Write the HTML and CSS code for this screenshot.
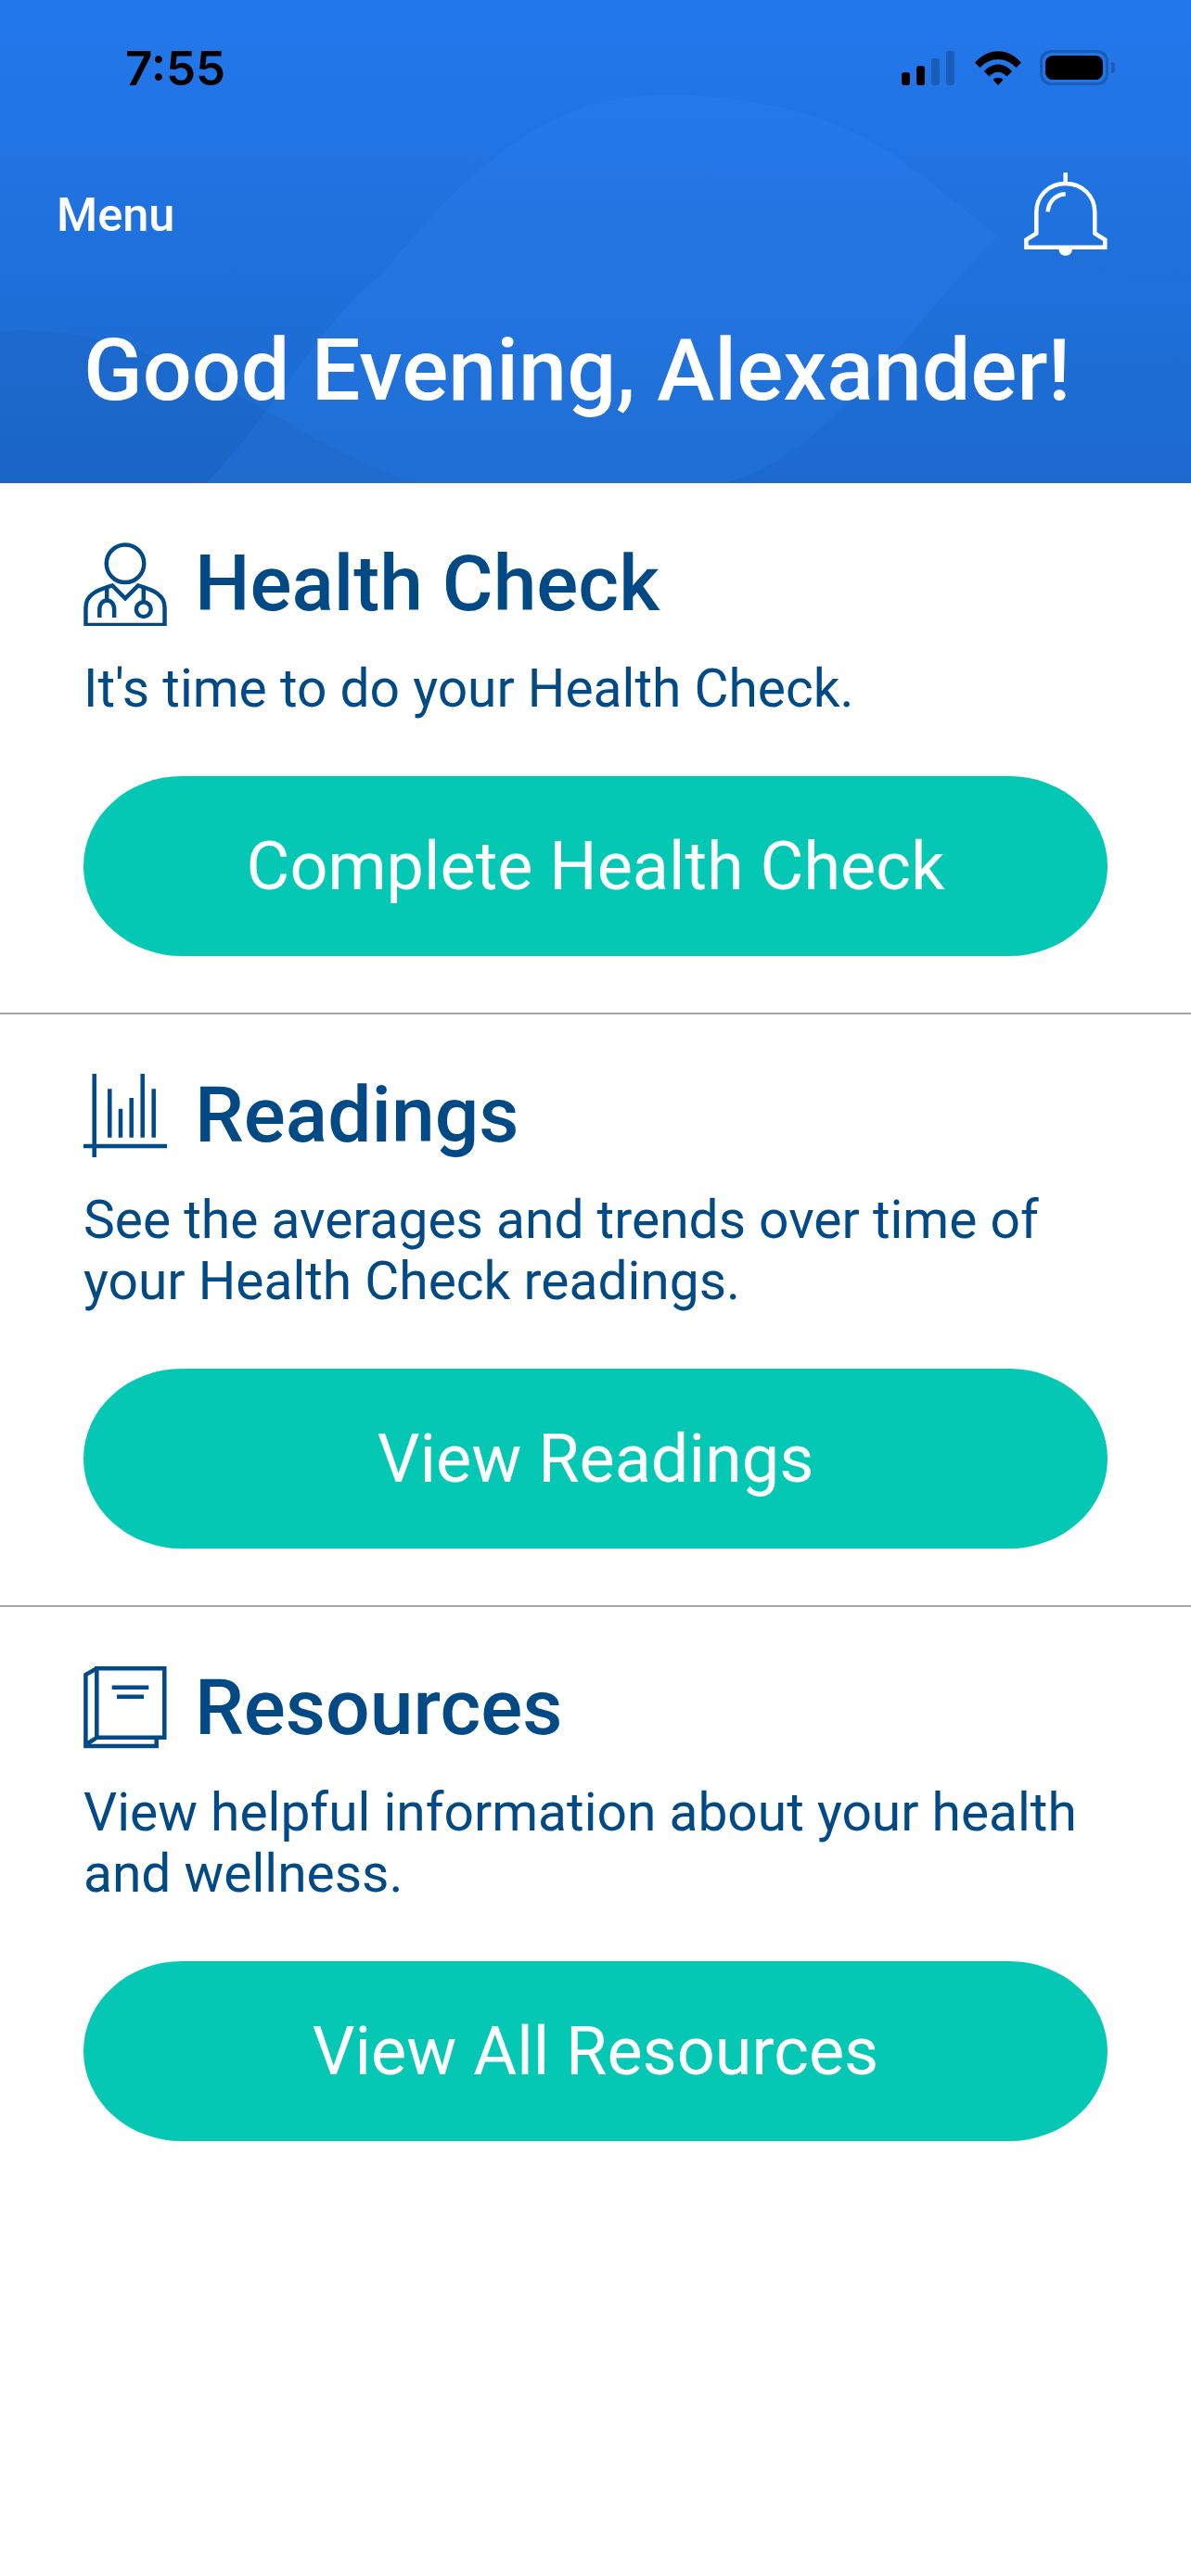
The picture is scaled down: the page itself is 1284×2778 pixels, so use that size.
FILE: index.html
```html
<!DOCTYPE html>
<html>
  <head>
    <title>Home</title>
    <link rel="stylesheet" href="styles.css">
  </head>
  <body>
    <header class="header">
      <svg class="waves" viewBox="0 0 1284 521" preserveAspectRatio="none">
        <path class="wave-a" d="M222 521C300 440 350 340 412 295C490 200 580 102 714 102C830 102 910 130 968 170C1010 200 1050 240 1112 273C1170 297 1230 305 1284 307V521Z"/>
        <path class="wave-b" d="M222 521C300 440 350 340 412 295C490 200 580 102 714 102C830 102 910 130 968 170C1010 200 1045 230 1075 255C1030 300 960 390 907 440C870 480 830 505 784 521Z"/>
        <path class="wave-c" d="M0 358C80 350 170 375 294 447C350 480 400 505 449 521H0Z"/>
      </svg>

      <div class="status-bar">
        <span class="time">7:55</span>
        <div class="status-icons">
          <div class="signal">
            <i class="bar bar-1"></i>
            <i class="bar bar-2"></i>
            <i class="bar bar-3"></i>
            <i class="bar bar-4"></i>
          </div>
          <svg class="wifi" viewBox="0 0 50 37">
            <path d="M0 12.500C14 -4 36 -4 50 12.500L44.500 18C33 6 17 6 5.500 18Z"/>
            <path d="M10 22C18 12 32 12 40 22L34.500 27.500C29 21 21 21 15.500 27.500Z"/>
            <path d="M19.500 31C22.500 28 27.500 28 30.500 31L25 37Z"/>
          </svg>
          <div class="battery"><i class="battery-fill"></i></div>
          <i class="battery-nub"></i>
        </div>
      </div>

      <div class="nav-row">
        <span class="menu">Menu</span>
        <svg class="bell" viewBox="0 0 90 90">
          <path d="M44.700 0V12M13.300 65.700V43C13.300 25 27 12 44.700 12S76.300 25 76.300 43V65.700L87.300 72.500V80.700H2.400V72.500Z"/>
          <path d="M25.700 42.300C26.500 31 34 24 44.700 23.300"/>
          <path class="clapper" d="M37.500 82H52C52 87 49 89.700 44.700 89.700S37.500 87 37.500 82Z"/>
        </svg>
      </div>

      <h1 class="greeting">Good Evening, Alexander!</h1>
    </header>

    <section class="card">
      <div class="card-head">
        <svg class="card-icon" viewBox="0 -1 90 91">
          <circle cx="45" cy="22" r="20.500"/>
          <path d="M2 89V70C2 56 14 51 31 46L45 60L59 46C76 51 88 56 88 70V89Z"/>
          <path d="M17 81V72C17 59 33 59 33 72V81M25 63V49"/>
          <circle cx="65" cy="72" r="8"/>
          <path d="M65 64V49"/>
        </svg>
        <h2>Health Check</h2>
      </div>
      <p>It's time to do your Health Check.</p>
      <button class="action">Complete Health Check</button>
    </section>

    <section class="card">
      <div class="card-head">
        <svg class="card-icon" viewBox="0 0 90 90">
          <path d="M11.700 0V90M0 78H90"/>
          <path d="M28.300 16.300V68.700M40 37.700V68.700M51.700 26V68.700M63.700 0V68.700M75.700 16.300V68.700"/>
        </svg>
        <h2>Readings</h2>
      </div>
      <p>See the averages and trends over time of your Health Check readings.</p>
      <button class="action">View Readings</button>
    </section>

    <section class="card card-last">
      <div class="card-head">
        <svg class="card-icon" viewBox="0 1 90 89">
          <path d="M14.300 2.700H87.300V77.300H14.300ZM14.300 2.700L2.400 9.500V86.500H78.700V77.300M2.400 85L14.300 77.300"/>
          <path d="M30.700 23.300H70.300M36 33.300H65"/>
        </svg>
        <h2>Resources</h2>
      </div>
      <p>View helpful information about your health and wellness.</p>
      <button class="action">View All Resources</button>
    </section>
  </body>
</html>
```

FILE: styles.css
```css
body {
  margin: 0;
  background: #fff;
  font-family: Roboto, "Liberation Sans", sans-serif;
}

.header {
  position: relative;
  height: 521px;
  box-sizing: border-box;
  overflow: hidden;
  background: linear-gradient(180deg, #2378ec 0%, #1b69cc 100%);
  color: #fff;
}

.waves {
  position: absolute;
  top: 0;
  left: 0;
  width: 100%;
  height: 100%;
}

.wave-a {
  fill: rgba(60, 140, 255, 0.05);
}

.wave-b {
  fill: rgba(60, 140, 255, 0.14);
}

.wave-c {
  fill: rgba(0, 0, 0, 0.03);
}

.status-bar,
.nav-row,
.greeting {
  position: relative;
}

.status-bar {
  display: flex;
  justify-content: space-between;
  align-items: center;
  height: 38px;
  padding: 54px 82px 0 135px;
}

.time {
  color: #000;
  font-family: Inter, sans-serif;
  font-size: 51px;
  font-weight: 600;
}

.status-icons {
  display: flex;
  align-items: flex-end;
}

.signal {
  display: flex;
  align-items: flex-end;
  gap: 6.500px;
  margin-right: 22px;
}

.bar {
  display: block;
  width: 9.500px;
  border-radius: 3px;
  background: #000;
}

.bar-1 {
  height: 14px;
}

.bar-2 {
  height: 21px;
}

.bar-3 {
  height: 29px;
  background: #1a5db8;
}

.bar-4 {
  height: 37px;
  background: #1a5db8;
}

.wifi {
  width: 50px;
  height: 37px;
  margin-right: 20px;
}

.wifi path {
  fill: #000;
}

.battery {
  display: flex;
  box-sizing: border-box;
  width: 74px;
  height: 38px;
  padding: 3px;
  border: 3px solid #1a5db8;
  border-radius: 12px;
}

.battery-fill {
  flex: 1;
  border-radius: 8px;
  background: #000;
}

.battery-nub {
  display: block;
  width: 4px;
  height: 12px;
  margin: 0 0 13px 3px;
  border-radius: 0 6px 6px 0;
  background: #1a5db8;
}

.nav-row {
  display: flex;
  justify-content: space-between;
  align-items: center;
  height: 90px;
  margin-top: 94px;
  padding: 0 90px 0 61px;
}

.menu {
  font-size: 50.500px;
  font-weight: 500;
}

.bell {
  width: 90px;
  height: 90px;
  fill: none;
  stroke: #fff;
  stroke-width: 4.500;
}

.bell .clapper {
  fill: #fff;
  stroke: none;
}

.greeting {
  margin: 71px 0 0;
  padding-left: 90px;
  font-size: 93.500px;
  font-weight: 500;
  line-height: 104px;
}

.card {
  padding: 64px 90px 61px;
  border-bottom: 2px solid #a6a6a6;
}

.card-last {
  border-bottom: none;
}

.card-head {
  display: flex;
  align-items: center;
  gap: 30px;
}

.card-icon {
  flex: none;
  width: 90px;
  height: 90px;
  fill: none;
  stroke: #024a86;
  stroke-width: 4.500;
}

.card h2 {
  margin: 0;
  color: #024a86;
  font-size: 84px;
  font-weight: 500;
  line-height: 90px;
}

.card p {
  margin: 35px 0 0;
  color: #024a86;
  font-size: 56.900px;
  line-height: 66.500px;
}

.action {
  display: block;
  width: 100%;
  height: 194px;
  margin-top: 60px;
  padding: 2px 0 0;
  border: none;
  border-radius: 106px / 97px;
  background: #04c8b4;
  color: #fff;
  font-family: inherit;
  font-size: 72px;
}
```
